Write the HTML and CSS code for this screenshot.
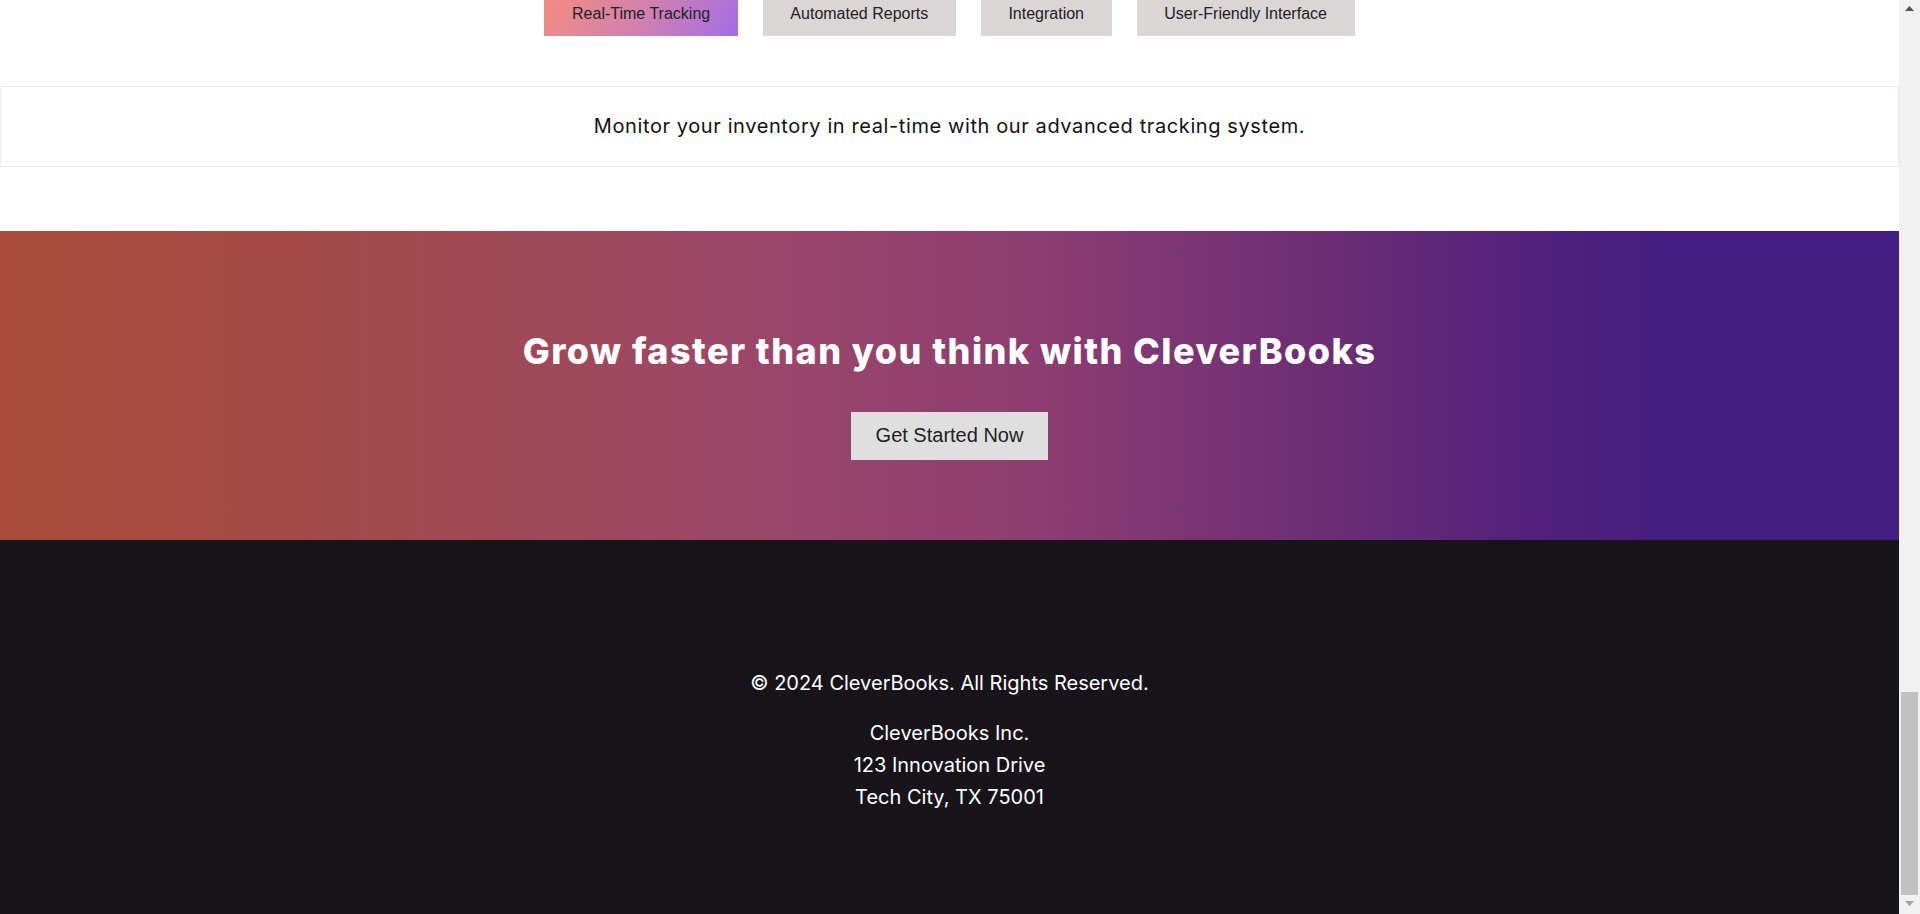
FILE: index.html
```html
<!DOCTYPE html>
<html lang="en">
<head>
<meta charset="utf-8">
<title>CleverBooks</title>
<link rel="stylesheet" href="styles.css">
</head>
<body>
<section class="features">
  <div class="tabs">
    <button class="tab active">Real-Time Tracking</button>
    <button class="tab">Automated Reports</button>
    <button class="tab">Integration</button>
    <button class="tab">User-Friendly Interface</button>
  </div>
  <div class="tab-panel">
    <p>Monitor your inventory in real-time with our advanced tracking system.</p>
  </div>
</section>
<section class="cta">
  <h2 class="cta-title">Grow faster than you think with CleverBooks</h2>
  <button class="cta-btn">Get Started Now</button>
</section>
<footer class="footer">
  <p class="copy">© 2024 CleverBooks. All Rights Reserved.</p>
  <address class="address">CleverBooks Inc.<br>123 Innovation Drive<br>Tech City, TX 75001</address>
</footer>
</body>
</html>
```

FILE: styles.css
```css
/* window chrome: the browser's scrollbar gutter (track, thumb, arrows) */
html {
  height: 100%;
  background-color: #f1f1f1;
  background-image:
    linear-gradient(#c1c1c1, #c1c1c1),
    url("data:image/svg+xml;utf8,<svg xmlns='http://www.w3.org/2000/svg' width='9' height='5'><polygon points='0,5 4.5,0 9,5' fill='%23505050'/></svg>"),
    url("data:image/svg+xml;utf8,<svg xmlns='http://www.w3.org/2000/svg' width='9' height='5'><polygon points='0,0 4.5,5 9,0' fill='%23a3a3a3'/></svg>");
  background-repeat: no-repeat;
  background-size: 17px 203px, 9px 5px, 9px 5px;
  background-position: right 2px bottom 19px, right 6px top 6px, right 6px bottom 8px;
}

body {
  margin: 0 21px 0 0;
  background: #ffffff;
  font-family: Inter, "Liberation Sans", sans-serif;
  color: #111111;
}

/* Features / tabs */
.features {
  padding-bottom: 64px;
}
.tabs {
  display: flex;
  justify-content: center;
  gap: 25px;
  margin-top: -8px;
}
.tab {
  border: none;
  margin: 0;
  padding: 12.8px 27.6px;
  background: #d9d6d5;
  color: #222222;
  font-family: "Liberation Sans", Arial, sans-serif;
  font-size: 16px;
  line-height: normal;
}
.tab.active {
  background: linear-gradient(120deg, #f58b80 0%, #d282ad 50%, #a36de9 100%);
}
.tab-panel {
  margin-top: 50px;
  border: 1px solid #ece8fb;
  padding: 20px;
  text-align: center;
}
.tab-panel p {
  margin: 0;
  font-size: 20px;
  letter-spacing: 0.6px;
  line-height: 39px;
  color: #111111;
}

/* Call to action */
.cta {
  padding: 80px 0;
  text-align: center;
  background: linear-gradient(90deg, #a94c39 0%, #a14a4f 22%, #9c476a 40%, #8c3d71 55%, #6c2d75 70%, #4f207d 82%, #451d81 88%, #441d82 100%);
}
.cta-title {
  margin: 19px 0 40px;
  font-size: 36px;
  line-height: 42px;
  font-weight: 800;
  letter-spacing: 1.45px;
  color: #ffffff;
}
.cta-btn {
  border: none;
  margin: 0;
  padding: 12.5px 24.5px;
  background: #e0dfe0;
  color: #222222;
  font-family: "Liberation Sans", Arial, sans-serif;
  font-size: 20px;
  line-height: normal;
}

/* Footer */
.footer {
  background: #17151a;
  color: #ffffff;
  text-align: center;
  padding: 127px 0 101px;
  font-size: 20px;
  line-height: 32px;
}
.copy {
  margin: 0 0 18px;
}
.address {
  font-style: normal;
}
```
